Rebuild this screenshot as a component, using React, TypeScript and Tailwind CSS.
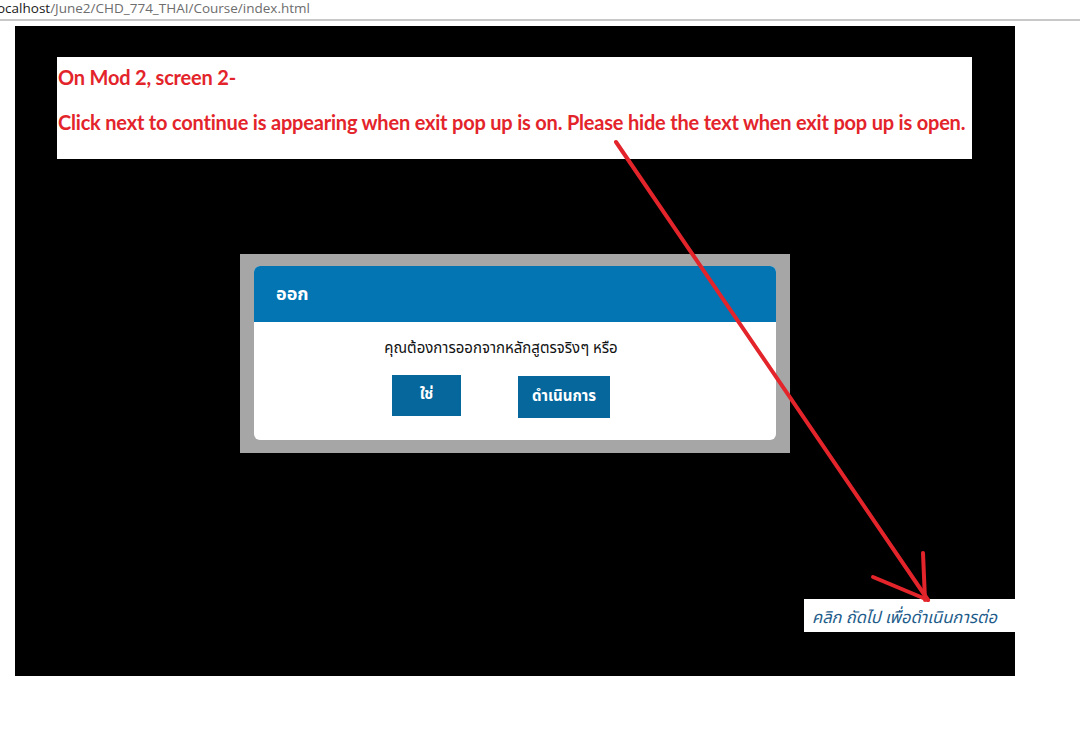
export default function App() {
  return (
    <div className="relative w-[1080px] h-[750px] bg-white overflow-hidden">
      {/* Browser address bar */}
      <div className="h-[21px] border-b-2 border-[#c8c8c8] flex items-start">
        <span
          className="text-[13.5px] leading-[16px] text-[#6d6d6d] -ml-[3px]"
          style={{ fontFamily: '"Segoe UI", "Open Sans", "Noto Sans", sans-serif' }}
        >
          <span className="text-[#1a1a1a]">ocalhost</span>/June2/CHD_774_THAI/Course/index.html
        </span>
      </div>

      {/* Course stage */}
      <div className="ml-[15px] mt-[5px] w-[1000px] h-[650px] bg-black flex flex-col">
        <div className="ml-[42px] mt-[31px] w-[915px] h-[102px] bg-white px-[1px] pt-[7px]">
          <p
            className="text-[20px] font-bold leading-[26px] text-[#e3242b] tracking-[-0.2px]"
            style={{ fontFamily: 'Lato, "Open Sans", sans-serif' }}
          >
            On Mod 2, screen 2-
          </p>
          <p
            className="mt-[19px] text-[20px] font-bold leading-[26px] text-[#e3242b] tracking-[-0.2px]"
            style={{ fontFamily: 'Lato, "Open Sans", sans-serif' }}
          >
            Click next to continue is appearing when exit pop up is on. Please hide the text when exit pop up is open.
          </p>
        </div>

        {/* Exit popup */}
        <div className="ml-[225px] mt-[95px] w-[550px] h-[199px] bg-[#a6a6a6] pt-[12px] px-[14px]">
          <div
            className="h-[174px] bg-white rounded-[6px] overflow-hidden flex flex-col"
            style={{ fontFamily: 'Tahoma, "Noto Sans Thai", "Noto Sans", sans-serif' }}
          >
            <div className="h-[56px] bg-[#0275b2] flex items-center px-[22px]">
              <span className="text-[18px] font-bold text-white">ออก</span>
            </div>
            <div className="flex flex-col items-center pr-[28px]">
              <p className="mt-[16px] text-[15px] leading-[22px] text-[#111]">คุณต้องการออกจากหลักสูตรจริงๆ หรือ</p>
              <div className="mt-[15px] flex items-start gap-[57px]">
                <button className="w-[69px] h-[41px] bg-[#05679c] text-white text-[15px] font-bold">ใช่</button>
                <button className="mt-[1px] w-[92px] h-[42px] bg-[#05679c] text-white text-[15px] font-bold">
                  ดำเนินการ
                </button>
              </div>
            </div>
          </div>
        </div>

        {/* Next prompt */}
        <div className="ml-[789px] mt-[146px] w-[211px] h-[33px] bg-white flex items-center px-[8px] pt-[6px]">
          <span
            className="text-[16.5px] italic text-[#1d5c8a] whitespace-nowrap"
            style={{ fontFamily: 'Tahoma, "Noto Sans Thai", "Noto Sans", sans-serif' }}
          >
            คลิก ถัดไป เพื่อดำเนินการต่อ
          </span>
        </div>
      </div>

      {/* Annotation arrow */}
      <svg className="absolute left-0 top-0 pointer-events-none" width="1080" height="750">
        <g stroke="#e3242b" strokeWidth="4" strokeLinecap="round" fill="none">
          <path d="M616 142 L928 600" />
          <path d="M873 577 L928 600" />
          <path d="M923 553 L925 600" />
        </g>
      </svg>
    </div>
  );
}
